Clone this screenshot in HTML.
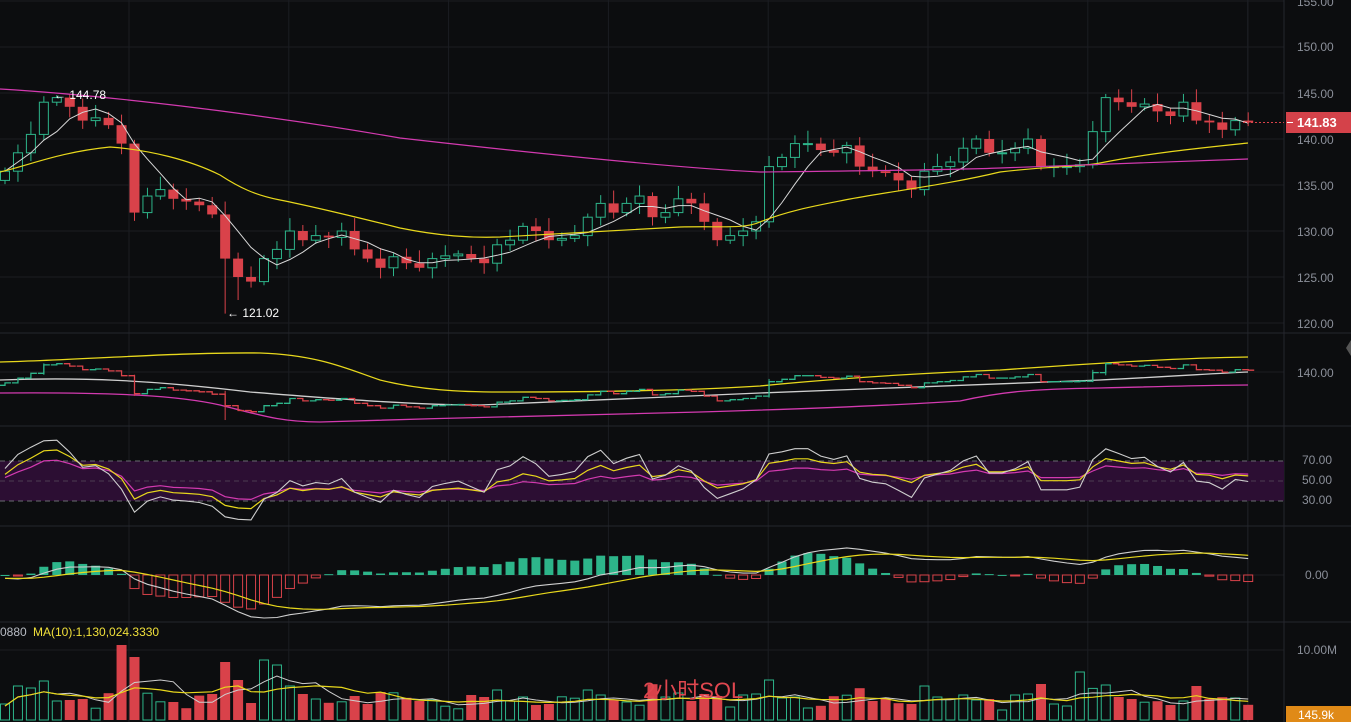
<!DOCTYPE html>
<html><head><meta charset="utf-8"><style>
html,body{margin:0;padding:0;background:#0c0d0f;overflow:hidden}
svg{display:block}
text{font-family:"Liberation Sans","Noto Sans CJK SC",sans-serif}
</style></head><body>
<svg id="s" width="1351" height="722" xmlns="http://www.w3.org/2000/svg">
<rect width="1351" height="722" fill="#0c0d0f"/>
<g id="g"></g>
<g font-size="12" fill="#8b8f99">
<text x="1297" y="6">155.00</text>
<text x="1297" y="51">150.00</text>
<text x="1297" y="98">145.00</text>
<text x="1297" y="144">140.00</text>
<text x="1297" y="190">135.00</text>
<text x="1297" y="236">130.00</text>
<text x="1297" y="282">125.00</text>
<text x="1297" y="328">120.00</text>
<text x="1297" y="377">140.00</text>
<text x="1302" y="464">70.00</text>
<text x="1302" y="484">50.00</text>
<text x="1302" y="504">30.00</text>
<text x="1305" y="579">0.00</text>
<text x="1297" y="654">10.00M</text>
</g>
<rect x="1286" y="112" width="65" height="21" fill="#d4424a"/>
<line x1="1287" y1="122.5" x2="1293" y2="122.5" stroke="#fff"/>
<text x="1297" y="127" font-size="13" font-weight="bold" fill="#fff">141.83</text>
<rect x="1286" y="706" width="65" height="18" fill="#e08a17"/>
<text x="1298" y="719" font-size="12" fill="#fff">145.9k</text>
<text x="54" y="99" font-size="12" fill="#fff">← 144.78</text>
<text x="227" y="317" font-size="12" fill="#fff">← 121.02</text>
<text x="0" y="636" font-size="12" fill="#b8bcc4">0880</text>
<text x="33" y="636" font-size="12" fill="#f0e03a">MA(10):1,130,024.3330</text>
<text x="643" y="698" font-size="22" fill="#e0474f">2小时SOL</text>
<path d="M1351 340 l-5 8 5 8z" fill="#555"/>
</svg>
<script>
var C=[136.5,138.5,140.5,144,144.5,143.5,142,142.3,141.5,139.5,132,133.8,134.5,133.5,133.2,132.8,131.8,127,125,124.5,127,128,130,129,129.5,129.3,130,128,127,126,127.2,126.5,126,127,127.3,127.5,127,126.5,128.5,129,130.5,130,129,129.2,129.5,131.5,133,132,133,133.8,131.5,132,133.5,133,131,129,129.5,130,131,137,138,139.5,139.5,138.8,138.5,139.3,137,136.5,136.3,135.5,134.5,136.5,137,137.5,139,140,138.5,138.5,139,140,137,137,137,137.2,140.8,144.5,144,143.5,143.8,143,142.5,144,142,141.8,141,142,141.8];
var N=C.length,sp=12.95,x0=5;
var g=document.getElementById('g'),h='';
var R='#d9424a',G='#2db58a';
function X(i){return x0+i*sp}
for(var gx=129;gx<1280;gx+=159.8)h+='<line x1="'+gx+'" y1="0" x2="'+gx+'" y2="722" stroke="#1b1d22"/>';
h+='<line x1="1248" y1="0" x2="1248" y2="722" stroke="#1b1d22"/>';
[1,47,93,139,185,231,277,323,372,575,650].forEach(function(y){h+='<line x1="0" y1="'+y+'" x2="1284" y2="'+y+'" stroke="#1b1d22"/>'});
[333,426,526,622].forEach(function(y){h+='<line x1="0" y1="'+y+'" x2="1351" y2="'+y+'" stroke="#25272d"/>'});
h+='<line x1="1284" y1="0" x2="1284" y2="722" stroke="#25272d"/>';
function Y(p){return 93+(145-p)*9.2}
function Y2(p){return 363+(144.78-p)*2.4}
var O=[],H=[],L=[];
for(var i=0;i<N;i++){var o=i?C[i-1]:135.5;O.push(o);var a=Math.max(o,C[i]),b=Math.min(o,C[i]);H.push(a+0.4+((i*7)%5)*0.25);L.push(b-0.4-((i*3)%4)*0.25)}
H[4]=144.78;L[17]=121.02;L[18]=122.5;
function line(arr,f,col,w){var s='';for(var i=0;i<arr.length;i++)if(arr[i]!=null)s+=(s?'L':'M')+X(i).toFixed(1)+' '+f(arr[i]).toFixed(1);return '<path d="'+s+'" fill="none" stroke="'+col+'" stroke-width="'+(w||1.2)+'"/>'}
function sma(a,n){var r=[];for(var i=0;i<a.length;i++){var s=0,c=0;for(var j=Math.max(0,i-n+1);j<=i;j++){s+=a[j];c++}r.push(s/c)}return r}
var pre=[];for(var k=0;k<20;k++)pre.push(140);var CC=pre.concat(C);
var m5=sma(C,5);
for(var i=0;i<N;i++){var x=X(i),up=C[i]>=O[i],col=up?G:R,t=Y(Math.max(O[i],C[i])),b=Y(Math.min(O[i],C[i]));if(b-t<1)b=t+1;
 h+='<line x1="'+x+'" y1="'+Y(H[i])+'" x2="'+x+'" y2="'+Y(L[i])+'" stroke="'+col+'"/>';
 if(up)h+='<rect x="'+(x-4.5)+'" y="'+t+'" width="9" height="'+(b-t)+'" fill="#0c0d0f" stroke="'+col+'"/>';
 else h+='<rect x="'+(x-5)+'" y="'+t+'" width="10" height="'+(b-t)+'" fill="'+col+'"/>';}
h+=line(m5,Y,'#d8d8d8',1);
h+='<path d="M0 172 C30 165 60 152 110 147 C150 150 190 160 220 175 C240 188 255 195 280 200 C320 208 360 218 400 228 C440 236 470 238 500 237 C560 234 620 230 680 227 C720 226 745 229 760 222 C790 210 820 205 850 199 C900 190 950 184 1000 172 C1050 166 1080 167 1100 163 C1150 153 1200 148 1248 143" fill="none" stroke="#e8d81c" stroke-width="1.2"/>';
h+='<path d="M0 89 C100 95 250 112 400 138 C550 155 680 168 760 172 C850 171 950 170 1000 168 C1100 165 1180 162 1248 159" fill="none" stroke="#d33ab0" stroke-width="1.2"/>';
h+='<line x1="1243" y1="122.5" x2="1284" y2="122.5" stroke="#d9424a" stroke-dasharray="2 2"/>';
h+='<path d="M0 362 C80 360 180 352 260 353 C320 355 350 370 380 380 C420 390 460 392 500 392 C600 392 700 390 760 386 C850 377 950 372 1000 370 C1100 363 1180 358 1248 357" fill="none" stroke="#e8d81c" stroke-width="1.3"/>';
h+='<path d="M0 393 C120 392 180 396 220 405 C260 415 280 422 320 422 C450 418 600 414 700 412 C800 409 900 405 960 401 C1000 392 1030 389 1100 388 C1180 386 1220 385 1248 385" fill="none" stroke="#d33ab0" stroke-width="1.3"/>';
h+='<path d="M0 380 C80 377 150 380 250 392 C350 400 420 405 480 405 C600 399 700 395 760 393 C900 388 1000 383 1100 380 C1180 376 1220 373 1248 372" fill="none" stroke="#cfcfcf" stroke-width="1.3"/>';
for(var i=0;i<N;i++){var x=X(i),col=C[i]>=O[i]?G:R;
 h+='<path d="M'+(x-6)+' '+Y2(O[i]).toFixed(1)+'H'+x+'V'+Y2(C[i]).toFixed(1)+'H'+(x+6)+'" fill="none" stroke="'+col+'" stroke-width="1.3"/>';
 if(Math.abs(C[i]-O[i])>3)h+='<line x1="'+x+'" y1="'+Y2(H[i])+'" x2="'+x+'" y2="'+Y2(L[i])+'" stroke="'+col+'"/>';}
h+='<rect x="0" y="461" width="1284" height="40" fill="#2c0e33"/>';
[461,481,501].forEach(function(y,k){h+='<line x1="0" y1="'+y+'" x2="1284" y2="'+y+'" stroke="#6a6a70" stroke-dasharray="5 4" opacity="'+(k==1?0.5:1)+'"/>'});
function rsi(n){var r=[],ag=0.3,al=0.3;for(var i=0;i<N;i++){var d=C[i]-O[i];ag=(ag*(n-1)+Math.max(d,0))/n;al=(al*(n-1)+Math.max(-d,0))/n;r.push(100*ag/(ag+al))}return r}
function YR(v){return 481-(v-50)*1.0}
h+=line(rsi(24),YR,'#d33ab0',1.2);h+=line(rsi(12),YR,'#e8d81c',1.2);h+=line(rsi(6),YR,'#cfcfcf',1.1);
function ema(a,n){var r=[],k=2/(n+1),e=a[0];for(var i=0;i<a.length;i++){e=a[i]*k+e*(1-k);r.push(e)}return r}
var e12=ema(CC,12).slice(20),e26=ema(CC,26).slice(20),dif=[];for(var i=0;i<N;i++)dif.push(e12[i]-e26[i]);
var dea=ema(dif,9),mx=0;dif.forEach(function(v){mx=Math.max(mx,Math.abs(v))});var sc=43/mx;
function YM(v){return 575-v*sc}
for(var i=0;i<N;i++){var v=(dif[i]-dea[i])*2,x=X(i),y=YM(v),col=v>=0?G:R,t=Math.min(y,575),hh=Math.max(Math.abs(y-575),1);
 h+=v>=0?'<rect x="'+(x-4.5)+'" y="'+t+'" width="9" height="'+hh+'" fill="'+col+'"/>':'<rect x="'+(x-4.5)+'" y="'+t+'" width="9" height="'+hh+'" fill="none" stroke="'+col+'"/>';}
h+=line(dif,YM,'#cfcfcf',1.1);h+=line(dea,YM,'#e8d81c',1.2);
var V=[];for(var i=0;i<N;i++){V.push(10+Math.abs(C[i]-O[i])*6+((i*13)%7)*2)}
V[9]=75;V[17]=58;V[18]=40;V[20]=60;V[21]=55;V[59]=40;V[83]=48;V[85]=35;V[68]=22;
for(var i=0;i<N;i++){var x=X(i),up=C[i]>=O[i],col=up?G:R,hh=Math.min(V[i],75);
 h+=up?'<rect x="'+(x-4.5)+'" y="'+(720-hh)+'" width="9" height="'+hh+'" fill="none" stroke="'+col+'"/>':'<rect x="'+(x-5)+'" y="'+(720-hh)+'" width="10" height="'+hh+'" fill="'+col+'"/>';}
var vm5=sma(V,5),vm10=sma(V,10);
function YV(v){return 722-v}
h+=line(vm5,YV,'#cfcfcf',1);h+=line(vm10,YV,'#e8d81c',1.2);
g.innerHTML=h;
</script>
</body></html>
